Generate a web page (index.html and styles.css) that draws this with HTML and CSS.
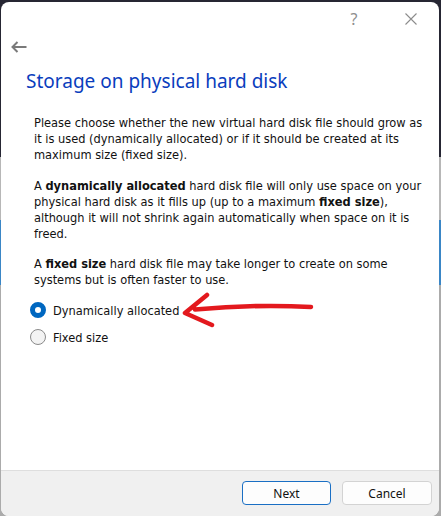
FILE: index.html
```html
<!DOCTYPE html>
<html lang="en">
<head>
<meta charset="utf-8">
<title>Storage on physical hard disk</title>
<link rel="stylesheet" href="styles.css">
</head>
<body>
<div class="window">
  <div class="titlebar">
    <span class="help">?</span>
    <span class="close">
      <svg width="12" height="12" viewBox="0 0 12 12"><path d="M0.5 0.5 L11.5 11.5 M11.5 0.5 L0.5 11.5" stroke="#8c8c8c" stroke-width="1.1" fill="none"/></svg>
    </span>
  </div>
  <div class="backrow">
    <svg class="back" width="16" height="12" viewBox="0 0 16 12"><path d="M15.5 6 H1.5 M6.5 1 L1.5 6 L6.5 11" stroke="#7a7a7a" stroke-width="2" fill="none"/></svg>
  </div>
  <h1 class="title">Storage on physical hard disk</h1>
  <div class="content">
    <p>Please choose whether the new virtual hard disk file should grow as it is used (dynamically allocated) or if it should be created at its maximum size (fixed size).</p>
    <p>A <b>dynamically allocated</b> hard disk file will only use space on your physical hard disk as it fills up (up to a maximum <b>fixed size</b>), although it will not shrink again automatically when space on it is freed.</p>
    <p>A <b>fixed size</b> hard disk file may take longer to create on some systems but is often faster to use.</p>
    <div class="options">
      <label class="option"><span class="radio checked"></span>Dynamically allocated</label>
      <label class="option"><span class="radio"></span>Fixed size</label>
      <svg class="annot" width="145" height="45" viewBox="0 0 145 45"><path d="M20 19.5 Q80 14 136 17 M32 5 L10 23 L37 35" stroke="#e3191e" stroke-width="4.5" stroke-linecap="round" stroke-linejoin="round" fill="none"/></svg>
    </div>
  </div>
  <div class="footer">
    <button class="btn primary">Next</button>
    <button class="btn">Cancel</button>
  </div>
</div>
</body>
</html>
```
FILE: styles.css
```css
html, body {
  margin: 0;
  padding: 0;
}
body {
  width: 441px;
  height: 516px;
  overflow: hidden;
  background: linear-gradient(to bottom, #262633 0, #262633 157px, #b7b7b7 157px, #b7b7b7 220px, #3a86c6 220px, #3a86c6 285px, #ababab 285px);
  padding: 2px 2px 0 1px;
  box-sizing: border-box;
}
.window {
  position: relative;
  height: 514px;
  width: 438px;
  background: #fff;
  border-radius: 8px;
  display: flex;
  flex-direction: column;
  overflow: hidden;
  font-family: "DejaVu Sans Condensed", "DejaVu Sans", sans-serif;
  font-size: 12.7px;
  color: #111;
}
.titlebar {
  height: 34px;
  display: flex;
  align-items: center;
  justify-content: flex-end;
  padding-right: 16px;
  gap: 33px;
}
.help {
  width: 24px;
  text-align: center;
  font-family: "Noto Sans", sans-serif;
  font-size: 16px;
  color: #8e8e8e;
  line-height: 20px;
}
.close {
  width: 24px;
  height: 24px;
  display: flex;
  align-items: center;
  justify-content: center;
}
.backrow {
  height: 22px;
  display: flex;
  align-items: center;
  padding-left: 10px;
}
.title {
  margin: 9px 0 0;
  padding-left: 25px;
  font-family: "Noto Sans", sans-serif;
  font-weight: 400;
  font-size: 19px;
  line-height: 28px;
  color: #0a3dbd;
}
.content {
  padding: 20px 6px 0 33px;
}
.content p {
  margin: 0 0 14.5px;
  line-height: 16px;
}
.content p:last-of-type {
  margin-bottom: 9px;
}
.options {
  position: relative;
  display: flex;
  flex-direction: column;
  gap: 1px;
  margin-left: -4px;
}
.option {
  height: 26px;
  display: flex;
  align-items: center;
  gap: 7px;
}
.radio {
  width: 16px;
  height: 16px;
  box-sizing: border-box;
  border-radius: 50%;
  border: 1px solid #8a8a8a;
  background: #f3f3f3;
}
.radio.checked {
  border: 5px solid #0067c0;
  background: #fff;
}
.annot {
  position: absolute;
  left: 145px;
  top: -7px;
}
.footer {
  margin-top: auto;
  border-top: 1px solid #dedede;
  background: #f0f0f0;
  height: 46px;
  box-sizing: border-box;
  display: flex;
  justify-content: flex-end;
  align-items: flex-start;
  padding: 10px 7px 0 0;
  gap: 11px;
}
.btn {
  width: 90px;
  height: 24px;
  box-sizing: border-box;
  border: 1px solid #d3d3d3;
  border-radius: 4px;
  background: #fdfdfd;
  font-family: "Noto Sans", sans-serif;
  font-size: 12px;
  color: #111;
  padding: 0;
}
.btn.primary {
  border-color: #1a6fc4;
  width: 89px;
}
```
